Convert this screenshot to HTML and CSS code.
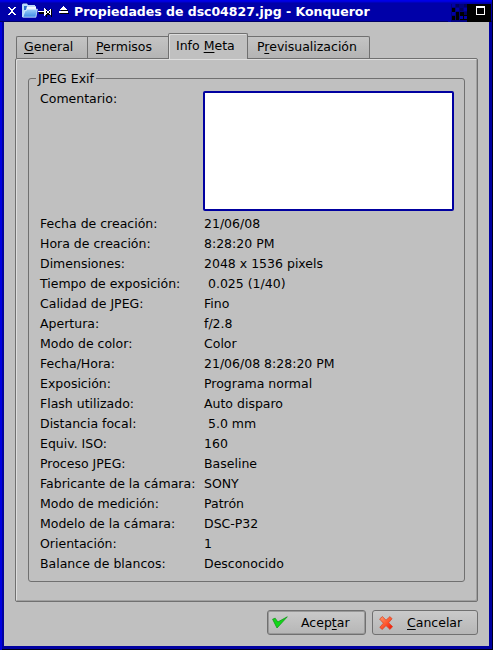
FILE: index.html
```html
<!DOCTYPE html>
<html lang="es">
<head>
<meta charset="utf-8">
<title>Propiedades de dsc04827.jpg - Konqueror</title>
<link rel="stylesheet" href="styles.css">
</head>
<body>
<div class="window">
  <header class="titlebar">
    <svg class="close" width="8" height="8" viewBox="0 0 8 8" shape-rendering="crispEdges"><path fill="#fff" d="M0 0h2v1h1v1h2v-1h1v-1h2v1h-1v1h-1v1h-1v2h1v1h1v1h1v1h-2v-1h-1v-1h-2v1h-1v1h-2v-1h1v-1h1v-1h1v-2h-1v-1h-1v-1h-1z"/></svg>
    <svg class="folder" width="16" height="16" viewBox="0 0 16 16">
      <defs><linearGradient id="fold" x1="0" y1="0" x2="0" y2="1"><stop offset="0" stop-color="#9fd0fa"/><stop offset="1" stop-color="#3b8ae6"/></linearGradient></defs>
      <path fill="#b9dcfa" d="M0 1.5L1 .5h4l1 1.5h7v12H0z"/>
      <path fill="#2a6fd0" d="M2 3h11v4H2z"/>
      <path fill="#f4f8ff" d="M5 3.3h9v4H4z"/>
      <path fill="url(#fold)" stroke="#d5eaff" stroke-width=".8" d="M5 6.2h10.4l-1.5 8H.8L3 7.6h1.4z"/>
    </svg>
    <svg class="pin" width="14" height="9" viewBox="0 0 14 9" shape-rendering="crispEdges"><path fill="#000" d="M1 4h6v2H1zM8 1h1v8H8zM9 3h3v4H9zM13 1h1v8h-1z"/><path fill="#fff" d="M0 3h6v1H0zM6 0h1v8H6zM7 1h1v6H7zM8 2h1v1H8zM9 3h2v1H9zM11 2h1v1h-1zM12 1h1v6h-1zM11 5h1v1h-1zM9 4h2v1H9zM8 5h1v1H8z"/></svg>
    <svg class="shade" width="10" height="8" viewBox="0 0 10 8" shape-rendering="crispEdges"><path fill="#000" d="M1 7h9v1H1zM2 4h7v1H2z"/><path fill="#fff" d="M4 0h1v1h1v1h1v1h1v1H1V3h1V2h1V1h1zM0 5h9v2H0z"/></svg>
    <h1>Propiedades de dsc04827.jpg - Konqueror</h1>
    <svg class="maximize" width="43" height="18" viewBox="0 0 43 18" shape-rendering="crispEdges">
      <path fill="#00007d" d="M0 0h20v18H0z"/><path fill="#000" d="M19 0h24v18H19zM4 4h3v4H4zM4 12h3v4H4zM8 8h3v8H8zM12 8h7v8h-7z"/>
      <path fill="#0000a8" d="M0 0h3v18H0zM4 0h3v3H4zM4 8h3v3H4zM8 4h3v3H8zM12 12h3v3h-3zM16 4h3v3h-3zM16 12h3v3h-3z"/>
      <path fill="#00005e" d="M8 0h3v3H8zM12 4h3v3h-3zM16 8h3v3h-3zM16 0h3v3h-3z"/>
      <path fill="#fff" fill-rule="evenodd" d="M28 2h9v9h-9zM29 4v6h7V4z"/>
    </svg>
  </header>
  <main class="client">
    <nav class="tabs">
      <span class="tab general"><span><u>G</u>eneral</span></span>
      <span class="tab permissions"><span><u>P</u>ermisos</span></span>
      <span class="tab active"><span>Info <u>M</u>eta</span></span>
      <span class="tab preview"><span>P<u>r</u>evisualización</span></span>
    </nav>
    <section class="panel">
      <fieldset class="group">
        <legend>JPEG Exif</legend>
        <label class="comment"><span>Comentario:</span><textarea></textarea></label>
        <dl>
          <dt>Fecha de creación:</dt><dd>21/06/08</dd>
          <dt>Hora de creación:</dt><dd>8:28:20 PM</dd>
          <dt>Dimensiones:</dt><dd>2048 x 1536 pixels</dd>
          <dt>Tiempo de exposición:</dt><dd> 0.025 (1/40)</dd>
          <dt>Calidad de JPEG:</dt><dd>Fino</dd>
          <dt>Apertura:</dt><dd>f/2.8</dd>
          <dt>Modo de color:</dt><dd>Color</dd>
          <dt>Fecha/Hora:</dt><dd>21/06/08 8:28:20 PM</dd>
          <dt>Exposición:</dt><dd>Programa normal</dd>
          <dt>Flash utilizado:</dt><dd>Auto disparo</dd>
          <dt>Distancia focal:</dt><dd> 5.0 mm</dd>
          <dt>Equiv. ISO:</dt><dd>160</dd>
          <dt>Proceso JPEG:</dt><dd>Baseline</dd>
          <dt>Fabricante de la cámara:</dt><dd>SONY</dd>
          <dt>Modo de medición:</dt><dd>Patrón</dd>
          <dt>Modelo de la cámara:</dt><dd>DSC-P32</dd>
          <dt>Orientación:</dt><dd>1</dd>
          <dt>Balance de blancos:</dt><dd>Desconocido</dd>
        </dl>
      </fieldset>
    </section>
    <footer class="actions">
      <button class="accept">
        <svg width="16" height="13" viewBox="0 0 16 13"><path fill="#12d818" stroke="#129a1a" stroke-width=".8" stroke-linejoin="round" d="M.6 3.2L3.2 2.2 5.8 6 15.3.8 5 12z"/></svg>
        <span>Acep<u>t</u>ar</span>
      </button>
      <button class="cancel">
        <svg width="14" height="14" viewBox="0 0 14 14"><defs><linearGradient id="red" x1="0" y1="0" x2="1" y2="1"><stop offset="0" stop-color="#ff9a6a"/><stop offset=".5" stop-color="#ff5a30"/><stop offset="1" stop-color="#f00a00"/></linearGradient></defs><path fill="url(#red)" stroke="#d8452a" stroke-width=".8" stroke-linejoin="round" d="M.6 3L3.4.6 7 4.2 11 .6l2 2.2L9.6 6.8l4 3.8-2.6 2.8L7 9.6l-3.8 3.8-2.4-2L4.4 7.2z"/></svg>
        <span><u>C</u>ancelar</span>
      </button>
    </footer>
  </main>
</div>
</body>
</html>
```

FILE: styles.css
```css
* { box-sizing: border-box; }
body {
  margin: 0;
  font: 12.5px/20px "DejaVu Sans", sans-serif;
  color: #000;
}
.window {
  display: flex;
  flex-direction: column;
  width: 493px;
  height: 650px;
  padding: 0 4px 4px;
  background: #0000a0;
  box-shadow: inset 2px 0 #0000e0, inset -1px -1px #000018;
}
.titlebar {
  display: flex;
  align-items: flex-start;
  flex: none;
  height: 22px;
  margin: 0 -3px 0 -4px;
  padding: 3px 0 0 8px;
  border-bottom: 1px solid #000064;
  background: linear-gradient(#0000e8 0 1px, #0000d0 2px, #0000a8 3px);
}
.close { margin-top: 4px; }
.folder { margin-left: 6px; }
.pin { margin-top: 5px; }
.shade { margin: 3px 0 0 7px; }
h1 {
  margin: 0 0 0 5px;
  color: #fff;
  font-size: 12.5px;
  letter-spacing: -.02px;
  line-height: 17px;
  white-space: nowrap;
}
.maximize { margin: 1px 1px 0 auto; }
.client {
  flex: 1;
  display: flex;
  flex-direction: column;
  padding: 11px;
  background: #c0c0c0;
}
.tabs {
  display: flex;
  align-items: flex-end;
  height: 25px;
  padding-left: 1px;
}
.tab {
  height: 22px;
  padding-left: 8px;
  border: 1px solid #707070;
  border-width: 1px 0 0 1px;
  background: linear-gradient(#c4c4c4, #b4b4b4);
  line-height: 20px;
  white-space: nowrap;
}
.general {
  width: 71px;
  padding-left: 7px;
  border-radius: 2px 0 0;
}
.permissions { width: 81px; }
.active {
  position: relative;
  width: 80px;
  height: 26px;
  margin: 0 -1px -1px 0;
  padding-left: 7px;
  border-right-width: 1px;
  border-radius: 2px 2px 0 0;
  background: #c0c0c0;
  box-shadow: inset 1px 1px #dcdcdc;
  line-height: 23px;
}
.preview {
  width: 123px;
  padding-left: 9px;
  border-right-width: 1px;
  border-radius: 0 2px 0 0;
}
u {
  text-decoration: underline;
  text-decoration-thickness: 1px;
  text-underline-offset: 2px;
}
.panel {
  height: 544px;
  padding: 12px 12px 0;
  border: 1px solid #707070;
  border-radius: 2px;
  box-shadow: inset 1px 1px #dedede, inset -1px -1px #a0a0a0;
}
.group {
  width: 437px;
  height: 511px;
  margin: 0;
  padding: 0 10px 0 11px;
  border: 1px solid #707070;
  border-radius: 3px;
}
legend {
  height: 14px;
  margin-left: -4px;
  padding: 0 2px;
  line-height: 16px;
}
.comment {
  display: flex;
  justify-content: space-between;
  height: 120px;
  margin-top: 6px;
}
.comment span { margin-top: -2px; }
textarea {
  width: 251px;
  height: 120px;
  border: 2px solid #0000a0;
  border-radius: 2px;
  outline: 0;
  background: #fff;
  resize: none;
}
dl {
  display: grid;
  grid-template-columns: 164px 1fr;
  grid-auto-rows: 20px;
  margin: 3px 0 0;
  white-space: pre;
}
dd { margin: 0; }
.actions {
  display: flex;
  justify-content: flex-end;
  gap: 6px;
  margin-top: 8px;
}
button {
  display: flex;
  align-items: center;
  height: 25px;
  padding: 0 0 0 6px;
  border: 1px solid #707070;
  border-radius: 3px;
  background: linear-gradient(#cacaca, #b6b6b6);
  color: #000;
  font: inherit;
}
.accept {
  width: 99px;
  padding-left: 4px;
  gap: 13px;
  box-shadow: inset 0 0 0 1px #999;
}
.cancel { width: 106px; gap: 14px; }
```
